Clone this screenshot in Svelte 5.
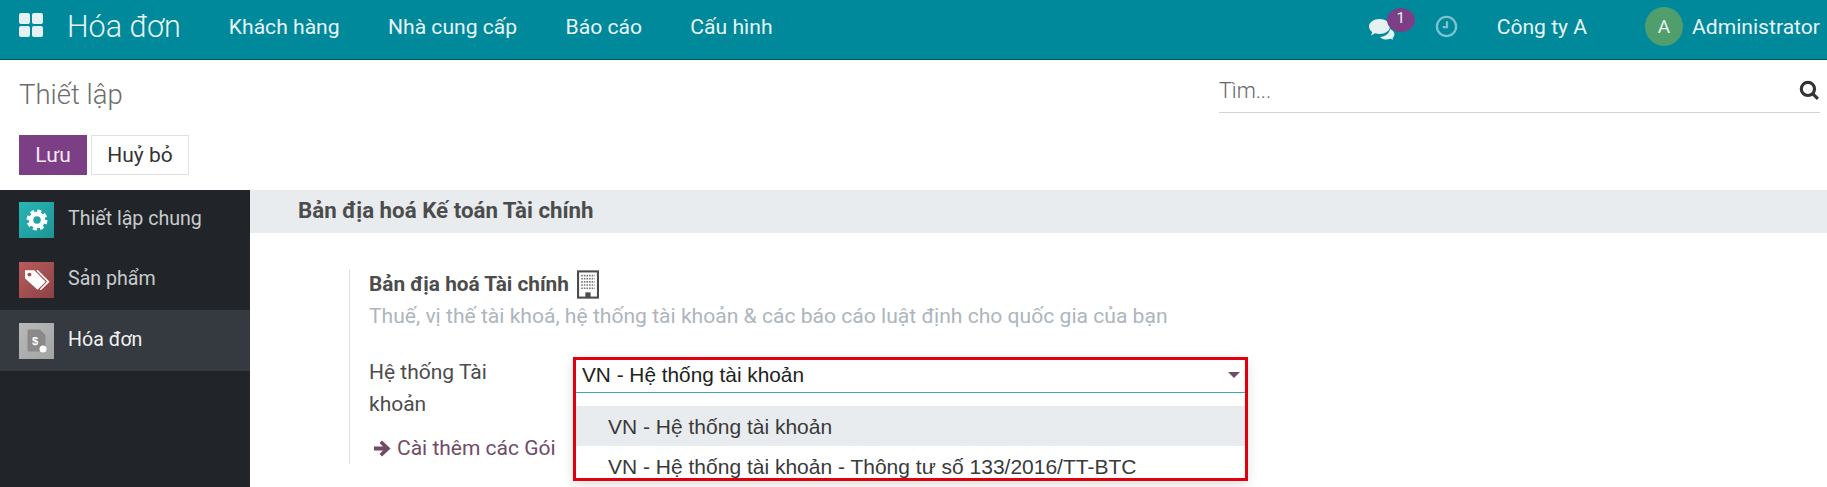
<script>
	const menus = ['Khách hàng', 'Nhà cung cấp', 'Báo cáo', 'Cấu hình'];
	const apps = [
		{ name: 'Thiết lập chung', kind: 'gear' },
		{ name: 'Sản phẩm', kind: 'tag' },
		{ name: 'Hóa đơn', kind: 'invoice', active: true }
	];
	const options = ['VN - Hệ thống tài khoản', 'VN - Hệ thống tài khoản - Thông tư số 133/2016/TT-BTC'];
</script>

<div class="page">
	<header class="navbar">
		<svg class="apps-icon" viewBox="0 0 24 24" width="24" height="24" aria-hidden="true">
			<rect x="0" y="0" width="11" height="11" rx="2" />
			<rect x="13" y="0" width="11" height="11" rx="2" />
			<rect x="0" y="13" width="11" height="11" rx="2" />
			<rect x="13" y="13" width="11" height="11" rx="2" />
		</svg>
		<span class="brand">Hóa đơn</span>
		<nav class="menu">
			{#each menus as m}
				<span>{m}</span>
			{/each}
		</nav>
		<div class="systray">
			<div class="messages">
				<svg viewBox="0 0 26 21" width="26" height="21" aria-hidden="true">
					<path d="M16 20.500c-2 0-3.600-1-5-2.500 5-.3 9.500-3.500 10-8 2.700 1.200 4.500 3 4.500 5.200 0 1.500-.8 2.800-2 3.700l.7 1.800-2.800-.9c-1.400.5-3 .7-4.400.7z" fill="#e4f2f3" />
					<path d="M10.500 0C4.700 0 0 3.300 0 7.500c0 2.200 1.300 4.200 3.300 5.500L2 16.500l4.300-2.200c1.300.4 2.700.7 4.200.7C16.300 15 21 11.700 21 7.500S16.300 0 10.500 0z" fill="#e4f2f3" />
				</svg>
				<span class="badge">1</span>
			</div>
			<svg class="clock" viewBox="0 0 24 24" width="23" height="23" aria-hidden="true">
				<circle cx="12" cy="12" r="10" />
				<path d="M12.500 6.500v6.200H8" />
			</svg>
			<span class="company">Công ty A</span>
			<span class="avatar">A</span>
			<span class="user">Administrator</span>
		</div>
	</header>

	<section class="control">
		<div class="control-top">
			<h1>Thiết lập</h1>
			<div class="search">
				<span>Tìm...</span>
				<svg viewBox="0 0 20 20" width="21" height="21" aria-hidden="true">
					<circle cx="8.500" cy="8.500" r="6.300" />
					<path d="M13 13l5 5" />
				</svg>
			</div>
		</div>
		<div class="buttons">
			<button class="primary">Lưu</button>
			<button class="secondary">Huỷ bỏ</button>
		</div>
	</section>

	<main class="body">
		<aside class="sidebar">
			{#each apps as app}
				<div class="app" class:active={app.active}>
					<span class="app-icon {app.kind}">
						{#if app.kind === 'gear'}
							<svg viewBox="0 0 24 24" width="24" height="24" aria-hidden="true">
								<circle cx="12" cy="12" r="6" fill="none" stroke="#fff" stroke-width="4.500" />
								<circle cx="12" cy="12" r="9" fill="none" stroke="#fff" stroke-width="3" stroke-dasharray="4 3.070" />
							</svg>
						{:else if app.kind === 'tag'}
							<svg viewBox="0 0 24 24" width="26" height="26" aria-hidden="true">
								<path d="M1 3h8.500L20 13.500 12.500 21 1 10.500z" fill="#fff" />
								<circle cx="5" cy="7" r="1.800" fill="#a84f51" />
								<path d="M12 3l10.500 10.500L15 21" fill="none" stroke="#fff" stroke-width="1.600" />
							</svg>
						{:else}
							<svg viewBox="0 0 24 24" width="24" height="26" aria-hidden="true">
								<path d="M3 1h12l5 5v16H3z" fill="#8a8a8a" stroke="#8a8a8a" stroke-width="1" />
								<circle cx="18" cy="20" r="3.500" fill="#fff" />
								<text x="7" y="16" class="dollar">$</text>
							</svg>
						{/if}
					</span>
					<span class="app-name">{app.name}</span>
				</div>
			{/each}
		</aside>

		<div class="settings">
			<h2 class="section-title">Bản địa hoá Kế toán Tài chính</h2>
			<div class="setting">
				<div class="setting-title">
					<strong>Bản địa hoá Tài chính</strong>
					<svg viewBox="0 0 21 27" width="22" height="29" aria-hidden="true">
						<rect x="1" y="1" width="19" height="25" fill="none" stroke="#4c4c4c" stroke-width="2" />
						<path d="M4 5h13M4 8h13M4 11h13M4 14h13M4 17h13" stroke="#777" stroke-width="1.500" stroke-dasharray="1.500 1" />
						<rect x="8" y="21" width="5" height="5" fill="#4c4c4c" />
					</svg>
				</div>
				<p class="muted">Thuế, vị thế tài khoá, hệ thống tài khoản &amp; các báo cáo luật định cho quốc gia của bạn</p>
				<div class="field">
					<label for="coa">Hệ thống Tài khoản</label>
				</div>
				<div class="link">
					<svg viewBox="0 0 18 16" width="18" height="17" aria-hidden="true">
						<path d="M0 6h9L5.500 2.500 8 0l8.500 8L8 16l-2.500-2.500L9 10H0z" fill="#714b67" />
					</svg>
					<span>Cài thêm các Gói</span>
				</div>
			</div>
		</div>
	</main>

	<div class="combo">
		<div class="combo-input">
			<span id="coa">VN - Hệ thống tài khoản</span>
			<i class="caret"></i>
		</div>
		<ul>
			{#each options as o, i}
				<li class:hover={i === 0}>{o}</li>
			{/each}
		</ul>
	</div>
</div>

<style>
	:global(body) {
		margin: 0;
		background: #fff;
	}

	.page {
		position: relative;
		width: 1827px;
		height: 487px;
		overflow: hidden;
		display: flex;
		flex-direction: column;
		font-family: Roboto, sans-serif;
		color: #4c4c4c;
	}

	.navbar {
		height: 59px;
		flex: none;
		display: flex;
		align-items: center;
		padding: 0 7px 0 19px;
		background: #00899b;
		border-bottom: 1px solid #0b5560;
		color: #e8f4f5;
		font-size: 21.100px;
	}

	.apps-icon {
		margin-top: -10px;
		fill: #e4f2f3;
	}

	.brand {
		margin: -6px 0 0 24px;
		font-size: 30.500px;
		font-weight: 300;
	}

	.menu {
		display: flex;
		gap: 48.400px;
		margin: -6px 0 0 48px;
	}

	.systray {
		display: flex;
		align-items: center;
		margin: -6px 0 0 auto;
	}

	.messages {
		position: relative;
		width: 46px;
		height: 24px;
		padding-top: 4px;
		box-sizing: border-box;
	}

	.badge {
		position: absolute;
		left: 18px;
		top: -7px;
		width: 28px;
		height: 24px;
		border-radius: 50%;
		background: #7c3f86;
		font-size: 15px;
		line-height: 21px;
		text-align: center;
	}

	.clock {
		margin-left: 20px;
		fill: none;
		stroke: #7cc3cc;
		stroke-width: 2.400;
	}

	.company {
		margin-left: 39px;
	}

	.avatar {
		width: 38px;
		height: 39px;
		margin-left: 58px;
		border-radius: 50%;
		background: #4f9e6b;
		font-size: 19px;
		line-height: 39px;
		text-align: center;
	}

	.user {
		margin-left: 9px;
	}

	.control {
		height: 130px;
		flex: none;
		box-sizing: border-box;
		padding: 0 7px 0 19px;
	}

	.control-top {
		display: flex;
		justify-content: space-between;
		height: 75px;
	}

	h1 {
		margin: 17px 0 0;
		font-size: 27.500px;
		font-weight: 300;
		line-height: 36px;
		color: #6d6d6d;
	}

	.search {
		width: 601px;
		height: 53px;
		box-sizing: border-box;
		padding-top: 9px;
		display: flex;
		align-items: center;
		justify-content: space-between;
		border-bottom: 1px solid #ced4da;
		font-size: 21.500px;
		font-weight: 300;
		color: #666;
	}

	.search svg {
		fill: none;
		stroke: #333;
		stroke-width: 3;
	}

	.buttons {
		display: flex;
		gap: 4px;
	}

	button {
		height: 40px;
		padding: 0;
		font: 21px Roboto, sans-serif;
	}

	.primary {
		width: 68px;
		background: #7c3f86;
		border: 0;
		color: #f2e9f2;
	}

	.secondary {
		width: 98px;
		background: #fff;
		border: 1px solid #dee2e6;
		color: #333;
	}

	.body {
		flex: 1;
		display: flex;
		min-height: 0;
	}

	.sidebar {
		width: 250px;
		flex: none;
		background: #212529;
		color: #c9cbcd;
		font-size: 19.600px;
	}

	.app {
		height: 60px;
		display: flex;
		align-items: center;
		gap: 14px;
		padding-left: 19px;
	}

	.app-name {
		margin-top: -3px;
	}

	.app.active {
		height: 61px;
		background: #343a40;
		color: #f1f1f1;
	}

	.app-icon {
		width: 35px;
		height: 36px;
		display: flex;
		align-items: center;
		justify-content: center;
	}

	.gear {
		background: linear-gradient(135deg, #2ab5b5, #1d9494);
	}

	.tag {
		background: linear-gradient(135deg, #b85c5c, #8c4245);
	}

	.invoice {
		background: linear-gradient(135deg, #b9b9b9, #a3a3a3);
	}

	.dollar {
		font: bold 11px "Liberation Sans", sans-serif;
		fill: #fff;
	}

	.settings {
		flex: 1;
		min-width: 0;
	}

	.section-title {
		height: 43px;
		margin: 0;
		padding-left: 48px;
		background: #e9ecef;
		font-size: 22.300px;
		font-weight: 700;
		line-height: 41px;
		color: #4c4c4c;
	}

	.setting {
		width: 880px;
		height: 195px;
		margin: 36px 0 0 99px;
		padding: 0 0 0 19px;
		border-left: 1px solid #dee2e6;
		box-sizing: border-box;
	}

	.setting-title {
		display: flex;
		align-items: center;
		gap: 8px;
		height: 30px;
		font-size: 20.800px;
	}

	.muted {
		margin: 2px 0 0;
		font-size: 21.100px;
		line-height: 30px;
		color: #adb5bd;
	}

	.field {
		width: 145px;
		margin-top: 25px;
		font-size: 21px;
		line-height: 32px;
	}

	.link {
		display: flex;
		align-items: center;
		gap: 5px;
		margin: 16px 0 0 5px;
		font-size: 21px;
		color: #714b67;
	}

	.combo {
		position: absolute;
		left: 573px;
		top: 357px;
		width: 675px;
		height: 124px;
		box-sizing: border-box;
		border: 3px solid #e2000f;
		overflow: hidden;
		background: #fff;
		box-shadow: 0 4px 12px rgba(0, 0, 0, 0.12);
		font-family: "Liberation Sans", sans-serif;
		font-size: 21px;
	}

	.combo-input {
		height: 33px;
		display: flex;
		align-items: center;
		justify-content: space-between;
		padding: 0 5px 2px 6px;
		box-sizing: border-box;
		border-bottom: 1px solid #3fa7b0;
		color: #222;
		font-size: 20.800px;
	}

	.caret {
		width: 0;
		height: 0;
		border: 6px solid transparent;
		border-top: 6px solid #714b67;
		border-bottom: 0;
	}

	ul {
		margin: 13px 0 0;
		padding: 0;
		list-style: none;
	}

	li {
		height: 40px;
		padding-left: 32px;
		line-height: 41px;
		color: #3a3a3a;
	}

	li.hover {
		background: #e9ecef;
	}
</style>
